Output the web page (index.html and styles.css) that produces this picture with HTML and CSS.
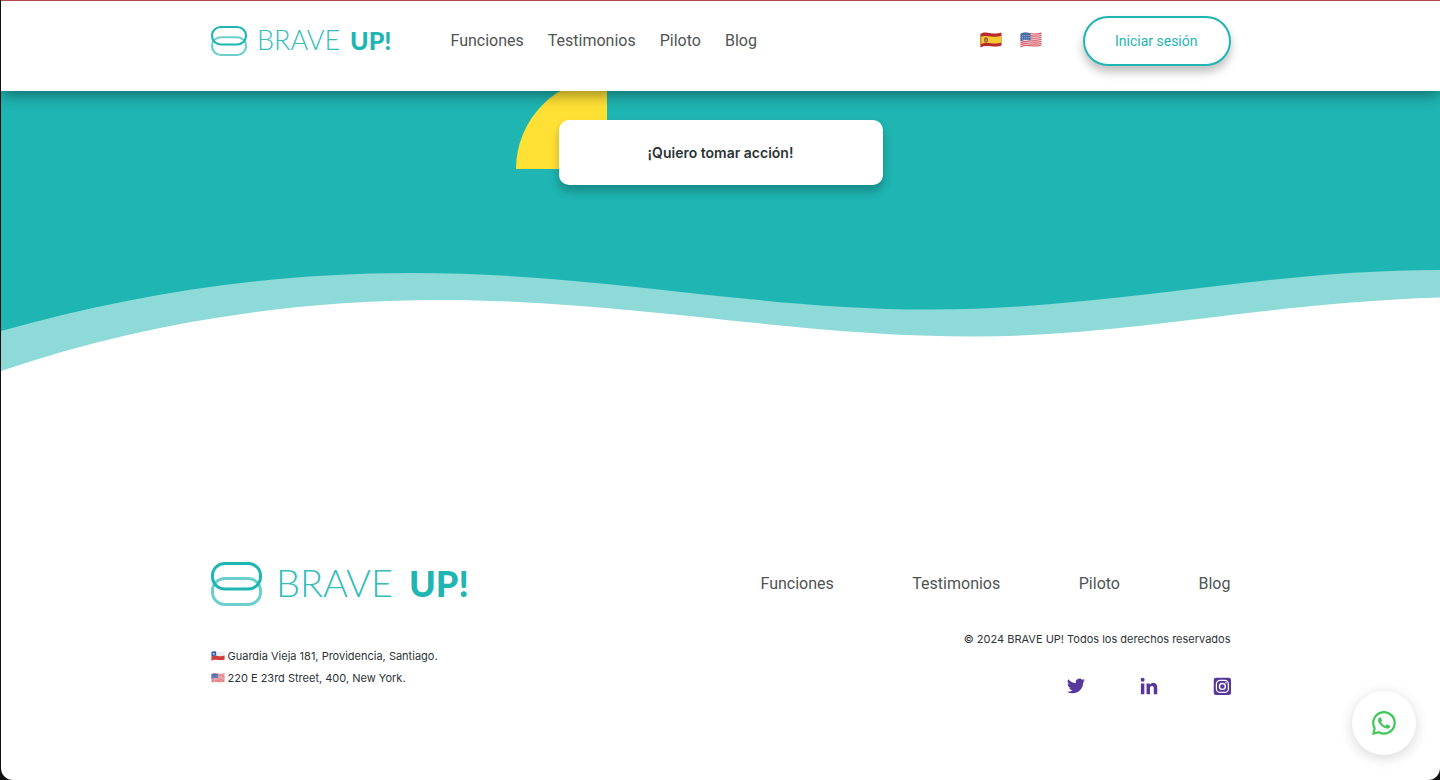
FILE: index.html
```html
<!DOCTYPE html>
<html lang="es">
<head>
<meta charset="utf-8">
<meta name="viewport" content="width=device-width, initial-scale=1">
<title>Brave Up!</title>
<link rel="stylesheet" href="styles.css">
</head>
<body>
<svg class="defs" width="0" height="0" aria-hidden="true">
  <symbol id="rings" viewBox="0 0 50 44" preserveAspectRatio="none">
    <rect x="1.5" y="16.500" width="47" height="26" rx="12" fill="none" stroke="#1fb5b2" stroke-opacity=".65" stroke-width="3"/>
    <rect x="1.500" y="1.500" width="47" height="25.500" rx="12" fill="none" stroke="#1fb5b2" stroke-width="3"/>
  </symbol>
  <symbol id="flag-es" viewBox="0 0 22 16">
    <path d="M.5 2C4-.2 7 .8 11 1.200S18 1.800 21.500.5V13.500C18 15 15 14.500 11 14.200S4 13.500.500 15.500Z" fill="#b92a2f"/>
    <path d="M.500 5C4 3.200 7 4 11 4.500S18 5 21.500 3.800V10.500C18 11.800 15 11.500 11 11.200S4 10.500.500 12.200Z" fill="#f7c72f"/>
    <rect x="4.200" y="5.500" width="3.600" height="5" rx="1.500" fill="#9c4a2c"/><path d="M5.200 7.200h1.600v2H5.200z" fill="#d8a08c"/>
    <path d="M.900 2.200V15" stroke="#8a4a30" stroke-width=".8" opacity=".6"/>
  </symbol>
  <symbol id="flag-us" viewBox="0 0 22 16">
    <path d="M.5 2C4-.2 7 .8 11 1.200S18 1.800 21.500.5V13.500C18 15 15 14.500 11 14.200S4 13.500.500 15.500Z" fill="#f3e9ea"/>
    <g fill="none" stroke="#d8505c" stroke-width="1.150">
      <path d="M.5 2.600C4 .5 7 1.400 11 1.800S18 2.400 21.500 1.100"/>
      <path d="M.5 4.600C4 2.600 7 3.500 11 3.900S18 4.500 21.500 3.200"/>
      <path d="M.5 6.700C4 4.700 7 5.600 11 6S18 6.600 21.500 5.300"/>
      <path d="M.5 8.700C4 6.700 7 7.600 11 8S18 8.600 21.500 7.300"/>
      <path d="M.5 10.800C4 8.800 7 9.700 11 10S18 10.600 21.500 9.300"/>
      <path d="M.5 12.800C4 10.800 7 11.700 11 12S18 12.600 21.500 11.300"/>
      <path d="M.5 14.900C4 12.900 7 13.300 11 13.700S18 14.500 21.500 13"/>
    </g>
    <path d="M.5 2C4-.2 7 .8 10.500 1.200V8.500C7 8 4 7.500.500 9.300Z" fill="#476fa8"/>
    <path d="M2 3.500h8M2 5.500h8M2 7.200h7" stroke="#c5d3e8" stroke-width=".7" stroke-dasharray=".8 1.100"/>
  </symbol>
  <symbol id="flag-cl" viewBox="0 0 22 16">
    <path d="M.5 2C4-.2 7 .8 11 1.200S18 1.800 21.500.5V13.500C18 15 15 14.500 11 14.200S4 13.500.500 15.500Z" fill="#eeeef1"/>
    <path d="M.500 8.700C4 7 7 7.500 11 8S18 8.500 21.500 7.200V13.500C18 15 15 14.500 11 14.200S4 13.500.500 15.500Z" fill="#d23c3c"/>
    <path d="M.5 2C3-.1 5.500.7 8 1V7.700C5 7.300 3 7.500.500 8.700Z" fill="#2f5da8"/>
    <path d="m4.200 2.600.6 1.400 1.500.1-1.200.9.400 1.500-1.300-.8-1.300.8.400-1.500-1.200-.9 1.500-.1z" fill="#fff"/>
  </symbol>
</svg>

<div class="page">
  <header class="header">
    <div class="container header-row">
      <a class="brand" href="#" aria-label="Brave Up!">
        <svg class="brand-small" viewBox="0 0 184 40" role="img">
          <use href="#rings" x="0" y="5" width="36" height="30"/>
          <text class="word-thin" x="46" y="29">BRAVE</text>
          <text class="word-bold" x="139" y="29">UP!</text>
        </svg>
      </a>
      <nav class="nav">
        <a href="#">Funciones</a>
        <a href="#">Testimonios</a>
        <a href="#">Piloto</a>
        <a href="#">Blog</a>
      </nav>
      <div class="languages">
        <button class="flag" aria-label="Español"><svg><use href="#flag-es"/></svg></button>
        <button class="flag" aria-label="English"><svg><use href="#flag-us"/></svg></button>
      </div>
      <button class="login">Iniciar sesión</button>
    </div>
  </header>

  <main>
    <section class="hero">
      <div class="cta-wrap">
        <span class="quarter"></span>
        <button class="cta">¡Quiero tomar acción!</button>
      </div>
    </section>
    <svg class="wave" viewBox="0 0 1439 122" preserveAspectRatio="none" aria-hidden="true">
      <path fill="#8edad8" d="M0 0H1439V47.500C1260 53 1130 86.500 974 86.500C790 86.500 630 50 440 50C290 50 140 73 0 121Z"/>
      <path fill="#1fb5b2" d="M0 0H1439V20C1260 20 1110 59.500 929 59.500C750 59.500 600 23 410 23C270 23 135 43 0 81Z"/>
    </svg>
  </main>

  <footer class="footer">
    <div class="container footer-row">
      <div class="footer-left">
        <svg class="brand-large" viewBox="0 0 260 54" role="img" aria-label="Brave Up!">
          <use href="#rings" x="0" y="5" width="51" height="44"/>
          <text class="word-thin" x="65" y="40">BRAVE</text>
          <text class="word-bold" x="198" y="40">UP!</text>
        </svg>
        <address class="address">
          <p><svg><use href="#flag-cl"/></svg>Guardia Vieja 181, Providencia, Santiago.</p>
          <p><svg><use href="#flag-us"/></svg>220 E 23rd Street, 400, New York.</p>
        </address>
      </div>
      <div class="footer-right">
        <nav class="footer-nav">
          <a href="#">Funciones</a>
          <a href="#">Testimonios</a>
          <a href="#">Piloto</a>
          <a href="#">Blog</a>
        </nav>
        <p class="copyright">© 2024 BRAVE UP! Todos los derechos reservados</p>
        <div class="social">
          <a href="#" aria-label="Twitter"><svg viewBox="0 0 24 24"><path d="M23.950 4.570a10 10 0 0 1-2.820.770 4.960 4.960 0 0 0 2.160-2.720c-.950.550-2 .950-3.130 1.180a4.920 4.920 0 0 0-8.380 4.480C7.690 8.090 4.070 6.130 1.640 3.160a4.920 4.920 0 0 0 1.520 6.570 4.900 4.900 0 0 1-2.230-.61v.06a4.920 4.920 0 0 0 3.950 4.830 5 5 0 0 1-2.210.080 4.940 4.940 0 0 0 4.600 3.420A9.870 9.870 0 0 1 0 19.540a13.990 13.990 0 0 0 7.560 2.210c9.050 0 14-7.500 14-13.980 0-.210 0-.420-.020-.630a9.940 9.940 0 0 0 2.460-2.550z"/></svg></a>
          <a href="#" aria-label="LinkedIn"><svg viewBox="0 0 24 24"><path d="M1.200 8.500h4.600V23H1.200zM3.500 1a2.700 2.700 0 1 1 0 5.400 2.700 2.700 0 0 1 0-5.400zM8.700 8.500h4.400v2c.9-1.500 2.400-2.400 4.400-2.400 4.600 0 5.500 3 5.500 7V23h-4.600v-7c0-1.900-.2-3.900-2.400-3.900-2.300 0-2.700 1.800-2.700 3.800V23H8.700z"/></svg></a>
          <a href="#" aria-label="Instagram"><svg viewBox="0 0 24 24"><rect x="1" y="1" width="23" height="23" rx="3"/><g fill="none" stroke="#fff"><rect x="4.500" y="4.500" width="16" height="16" rx="5" stroke-width="1.600"/><circle cx="12.500" cy="12.500" r="3.900" stroke-width="1.800"/></g><circle cx="17.300" cy="7.700" r="1.100" fill="#fff"/></svg></a>
        </div>
      </div>
    </div>
  </footer>

  <a class="whatsapp" href="#" aria-label="WhatsApp">
    <svg viewBox="0 0 24 24"><path d="M17.470 14.380c-.300-.150-1.760-.870-2.030-.970-.270-.100-.470-.150-.670.150-.200.300-.770.970-.940 1.160-.170.200-.350.220-.640.080-.300-.150-1.260-.460-2.390-1.480-.880-.790-1.480-1.760-1.650-2.060-.170-.300-.020-.460.130-.610.130-.130.300-.350.450-.520.150-.170.200-.300.300-.500.100-.200.050-.370-.030-.520-.070-.150-.670-1.610-.920-2.210-.240-.580-.490-.500-.670-.510l-.570-.010c-.200 0-.520.070-.790.370-.270.300-1.040 1.020-1.040 2.480s1.060 2.870 1.210 3.070c.150.200 2.100 3.200 5.080 4.490.710.310 1.260.490 1.690.630.710.230 1.360.190 1.870.120.570-.090 1.760-.720 2.010-1.410.250-.690.250-1.290.170-1.410-.070-.120-.270-.200-.570-.350z"/><path fill="none" stroke="#41c858" stroke-width="2.200" d="M1.500 22.500 2.700 17.200A10.700 10.700 0 1 1 6.800 21.200Z"/></svg>
  </a>
</div>
</body>
</html>
```
FILE: styles.css
```css
* { box-sizing: border-box; }

body {
  margin: 0;
  background: #111;
  font-family: Inter, "Liberation Sans", sans-serif;
  color: #2d3436;
}

a { color: inherit; text-decoration: none; }
p { margin: 0; }
button { font: inherit; color: inherit; cursor: pointer; }
svg { display: block; }
.defs { position: absolute; }

.page {
  display: flex;
  flex-direction: column;
  min-height: 100vh;
  margin-left: 1px;
  background: #fff;
  border-top: 1px solid #b5494c;
  border-radius: 0 0 12px 12px;
  overflow: hidden;
}

.container {
  width: 100%;
  max-width: 1020px;
  margin: 0 auto;
}

.header {
  position: relative;
  z-index: 2;
  padding: 15px 0 25px;
  background: #fff;
  box-shadow: 0 4px 14px rgba(0, 0, 0, .4);
}

.header-row { display: flex; align-items: center; }
.brand-small { width: 184px; height: 40px; }

.nav {
  display: flex;
  gap: 24px;
  margin-left: 56px;
  font: 16px/20px Roboto, sans-serif;
  color: #4f5454;
}

.languages {
  display: flex;
  gap: 18px;
  margin-left: auto;
  padding-bottom: 2px;
}
.flag { padding: 0; border: 0; background: none; }
.flag svg { width: 22px; height: 16px; }

.login {
  height: 50px;
  margin-left: 41px;
  padding: 0 31px 0 30px;
  border: 2px solid #1fb5b2;
  border-radius: 25px;
  background: #fff;
  color: #1fb5b2;
  font: 14px Roboto, sans-serif;
  box-shadow: 0 6px 10px rgba(0, 0, 0, .25);
}

.word-thin {
  font-family: Lato, sans-serif;
  font-weight: 300;
  font-size: 27px;
  fill: #35bdba;
}
.word-bold {
  font-family: Lato, sans-serif;
  font-weight: 900;
  font-size: 25px;
  fill: #1fb5b2;
}
.brand-large .word-thin { font-size: 38px; }
.brand-large .word-bold { font-size: 36px; }

.hero {
  display: flex;
  justify-content: center;
  padding: 29px 0 65px;
  background: #1fb5b2;
}

.cta-wrap { position: relative; }

.quarter {
  position: absolute;
  left: -43px;
  bottom: 16px;
  width: 91px;
  height: 91px;
  border-radius: 91px 0 0 0;
  background: #ffe135;
}

.cta {
  position: relative;
  width: 324px;
  height: 65px;
  border: 0;
  border-radius: 10px;
  background: #fff;
  font-size: 14px;
  font-weight: 600;
  box-shadow: 0 6px 10px rgba(0, 0, 0, .25);
}

.wave { width: 100%; height: 122px; }

.footer { padding: 185px 0 84px; }
.footer-row { display: flex; justify-content: space-between; }
.brand-large { width: 260px; height: 54px; }

.address {
  margin-top: 34px;
  font-size: 11px;
  font-style: normal;
  line-height: 22px;
}
.address p { display: flex; align-items: center; gap: 3px; }
.address svg { width: 14px; height: 10px; }

.footer-right { width: 470px; padding-top: 17px; }

.footer-nav {
  display: flex;
  justify-content: space-between;
  font: 16px/20px Roboto, sans-serif;
  color: #4f5454;
}

.copyright {
  margin-top: 35px;
  font-size: 11px;
  line-height: 20px;
  text-align: right;
}

.social {
  display: flex;
  justify-content: flex-end;
  gap: 55px;
  margin-top: 28px;
}
.social svg { width: 18px; height: 18px; fill: #57379b; }

.whatsapp {
  position: fixed;
  right: 24px;
  bottom: 25px;
  display: grid;
  place-items: center;
  width: 64px;
  height: 64px;
  border-radius: 50%;
  background: #fff;
  box-shadow: 0 3px 14px rgba(0, 0, 0, .16);
}
.whatsapp svg { width: 24px; height: 24px; fill: #41c858; }
```
